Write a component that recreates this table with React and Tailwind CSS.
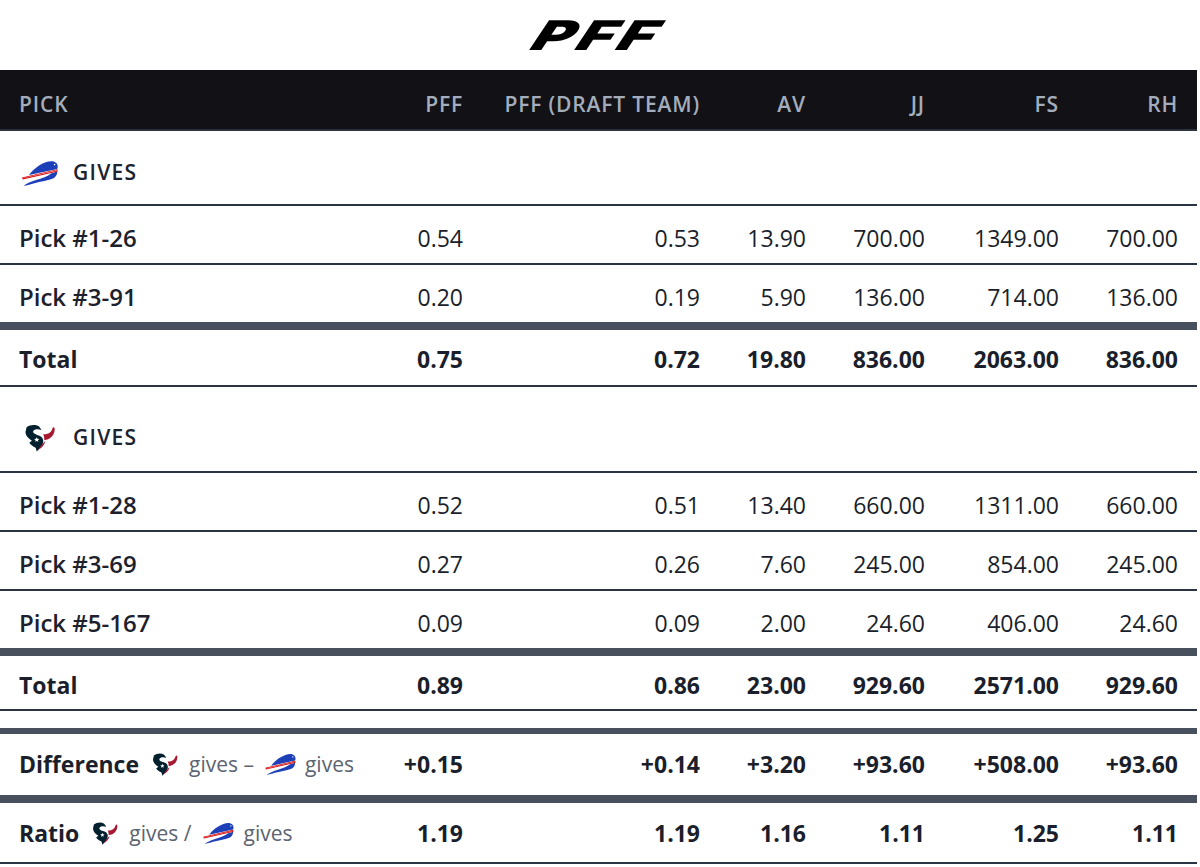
function BillsLogo({ className }) {
  return (
    <svg className={className} viewBox="0 0 36 26" aria-hidden="true">
      {/* back and hump */}
      <path fill="#1d3fb8" d="M7 15 C11 9.5 17 4.5 24.5 2 C28.5 0.6 32.5 0.8 34.6 3.2 C35.9 4.8 36 7.2 35.3 9 Z" />
      {/* head, chest and trailing legs */}
      <path
        fill="#1d3fb8"
        d="M35.4 11.4 C35.2 14.4 33.8 16.8 31.6 18.2 C26.5 20.6 19 21.2 11.5 23.4 C8 24.4 4.5 25.6 1.5 25.8 C5 23.4 9 21.6 14 20 C20 18.2 25.5 16.5 29.5 13.2 Z"
      />
      {/* speed streak */}
      <path fill="#d50a0a" d="M0 17.4 L35.4 9.2 L35.6 11.6 L0.8 19.6 Z" />
      <path fill="#ffffff" d="M1.4 17.9 L34.4 10.3 L34.5 10.7 L1.6 18.3 Z" />
      <circle cx="32.6" cy="4.6" r="0.8" fill="#ffffff" />
    </svg>
  )
}

function TexansLogo({ className }) {
  return (
    <svg className={className} viewBox="0 0 30 28" aria-hidden="true">
      {/* bull head */}
      <path
        fill="#03202f"
        d="M2 4 C5 1.5 10 1 13.5 3 L16 6.5 C12.5 5.5 9 5.8 8.2 7.8 C7.6 9.6 10 10.6 13.2 11.6 C17 12.8 18.6 16 17 19.5 C15.8 22 13.6 24.5 11.5 26.5 L10.5 23 C8 22 5.8 20.5 4.5 18.5 L7 16.5 C3.5 14.5 1 11.5 1 8.5 Z"
      />
      {/* horn */}
      <path
        fill="#a71930"
        d="M17.5 10.5 C21.5 11 25 9.2 26.2 5 C26.6 3.8 27.8 3.6 28.2 4.8 C28.8 10.5 24.5 15.5 18.5 15.8 C18.6 14 18.3 12 17.5 10.5 Z"
      />
      <path fill="#a71930" d="M12.5 25 C15 21.5 17.5 19 19.5 16.8 C19 20 16.5 23.5 12.5 25 Z" />
      {/* star */}
      <path fill="#ffffff" d="M11.5 13.2 L12.2 14.8 L13.9 14.9 L12.6 16 L13 17.6 L11.5 16.7 L10 17.6 L10.4 16 L9.1 14.9 L10.8 14.8 Z" />
    </svg>
  )
}

const bills = [
  ['Pick #1-26', '0.54', '0.53', '13.90', '700.00', '1349.00', '700.00'],
  ['Pick #3-91', '0.20', '0.19', '5.90', '136.00', '714.00', '136.00'],
]
const billsTotal = ['0.75', '0.72', '19.80', '836.00', '2063.00', '836.00']

const texans = [
  ['Pick #1-28', '0.52', '0.51', '13.40', '660.00', '1311.00', '660.00'],
  ['Pick #3-69', '0.27', '0.26', '7.60', '245.00', '854.00', '245.00'],
  ['Pick #5-167', '0.09', '0.09', '2.00', '24.60', '406.00', '24.60'],
]
const texansTotal = ['0.89', '0.86', '23.00', '929.60', '2571.00', '929.60']

const difference = ['+0.15', '+0.14', '+3.20', '+93.60', '+508.00', '+93.60']
const ratio = ['1.19', '1.19', '1.16', '1.11', '1.25', '1.11']

const headers = ['PFF', 'PFF (DRAFT TEAM)', 'AV', 'JJ', 'FS', 'RH']

function PickRow({ row, last }) {
  const border = last ? 'border-b-[8px] border-[#48505d]' : 'border-b-2 border-[#2b3443]'
  return (
    <tr>
      <td className={`pl-[19px] pt-[17px] pb-[10px] leading-[30px] font-semibold text-[24px] text-[#1c212c] ${border}`}>{row[0]}</td>
      {row.slice(1).map((v, i) => (
        <td key={i} className={`pr-[19px] pt-[17px] pb-[10px] leading-[30px] text-right text-[23px] ${border}`}>
          {v}
        </td>
      ))}
    </tr>
  )
}

function TotalRow({ values, pt }) {
  return (
    <tr>
      <td className={`pl-[19px] ${pt} leading-[30px] font-bold text-[23px] border-b-2 border-[#2b3443]`}>Total</td>
      {values.map((v, i) => (
        <td key={i} className={`pr-[19px] ${pt} leading-[30px] text-right font-bold text-[23px] border-b-2 border-[#2b3443]`}>
          {v}
        </td>
      ))}
    </tr>
  )
}

function GivesRow({ logo, pad }) {
  return (
    <tr>
      <td colSpan={7} className={`pl-[19px] ${pad} border-b-2 border-[#2b3443]`}>
        <div className="flex items-center h-[28px]">
          <div className="w-[42px] flex justify-center">{logo}</div>
          <span className="ml-[12px] text-[21px] font-semibold tracking-[0.06em] text-[#1c2230]">GIVES</span>
        </div>
      </td>
    </tr>
  )
}

export default function App() {
  return (
    <div className="w-[1200px] h-[867px] bg-white overflow-hidden text-[#1a1f2b]" style={{ fontFamily: '"Open Sans", "Noto Sans", sans-serif' }}>
      {/* logo bar */}
      <div className="h-[70px] w-[1197px] flex items-center justify-center">
        <span
          className="inline-block text-[41px] leading-none font-black text-black tracking-[3px] [transform:scaleX(1.5)_skewX(-24deg)]"
          style={{ fontFamily: 'Inter, "Liberation Sans", sans-serif' }}
        >
          PFF
        </span>
      </div>

      <table className="w-[1197px] table-fixed border-collapse">
        <colgroup>
          <col className="w-[380px]" />
          <col className="w-[102px]" />
          <col className="w-[237px]" />
          <col className="w-[106px]" />
          <col className="w-[119px]" />
          <col className="w-[134px]" />
          <col className="w-[119px]" />
        </colgroup>
        <thead>
          <tr className="bg-[#111116]">
            <th className="pl-[19px] pt-[20px] pb-[11px] leading-[28px] text-left text-[21px] font-semibold tracking-[0.04em] text-[#a3adbb] border-b-2 border-[#2c3340]">
              PICK
            </th>
            {headers.map((h) => (
              <th
                key={h}
                className="pr-[19px] pt-[20px] pb-[11px] leading-[28px] text-right text-[21px] font-semibold tracking-[0.04em] text-[#a3adbb] whitespace-nowrap border-b-2 border-[#2c3340]"
              >
                {h}
              </th>
            ))}
          </tr>
        </thead>
        <tbody>
          <GivesRow pad="pt-[28px] pb-[17px]" logo={<BillsLogo className="w-[36px] h-[26px]" />} />
          {bills.map((r, i) => (
            <PickRow key={r[0]} row={r} last={i === bills.length - 1} />
          ))}
          <TotalRow values={billsTotal} pt="pt-[14px] pb-[11px]" />

          <GivesRow pad="pt-[37px] pb-[19px]" logo={<TexansLogo className="w-[33px] h-[30px]" />} />
          {texans.map((r, i) => (
            <PickRow key={r[0]} row={r} last={i === texans.length - 1} />
          ))}
          <TotalRow values={texansTotal} pt="pt-[14px] pb-[9px]" />

          <tr>
            <td colSpan={7} className="h-[21px] p-0 border-b-[6px] border-[#48505d]" />
          </tr>

          <tr>
            <td className="pl-[19px] pt-[15px] pb-[16px] leading-[30px] border-b-[8px] border-[#48505d] whitespace-nowrap">
              <div className="flex items-center">
                <span className="font-bold text-[23px]">Difference</span>
                <TexansLogo className="ml-[13px] w-[27px] h-[25px]" />
                <span className="ml-[10px] text-[21px] text-[#5d6470]">gives –</span>
                <BillsLogo className="ml-[11px] w-[31px] h-[22px]" />
                <span className="ml-[9px] text-[21px] text-[#5d6470]">gives</span>
              </div>
            </td>
            {difference.map((v, i) => (
              <td key={i} className="pr-[19px] pt-[15px] pb-[16px] leading-[30px] text-right font-bold text-[23px] border-b-[8px] border-[#48505d]">
                {v}
              </td>
            ))}
          </tr>

          <tr>
            <td className="pl-[19px] pt-[15px] pb-[14px] leading-[30px] border-b-2 border-[#2b3443] whitespace-nowrap">
              <div className="flex items-center">
                <span className="font-bold text-[23px]">Ratio</span>
                <TexansLogo className="ml-[13px] w-[27px] h-[25px]" />
                <span className="ml-[10px] text-[21px] text-[#5d6470]">gives /</span>
                <BillsLogo className="ml-[12px] w-[31px] h-[22px]" />
                <span className="ml-[9px] text-[21px] text-[#5d6470]">gives</span>
              </div>
            </td>
            {ratio.map((v, i) => (
              <td key={i} className="pr-[19px] pt-[15px] pb-[14px] leading-[30px] text-right font-bold text-[23px] border-b-2 border-[#2b3443]">
                {v}
              </td>
            ))}
          </tr>
        </tbody>
      </table>
    </div>
  )
}
